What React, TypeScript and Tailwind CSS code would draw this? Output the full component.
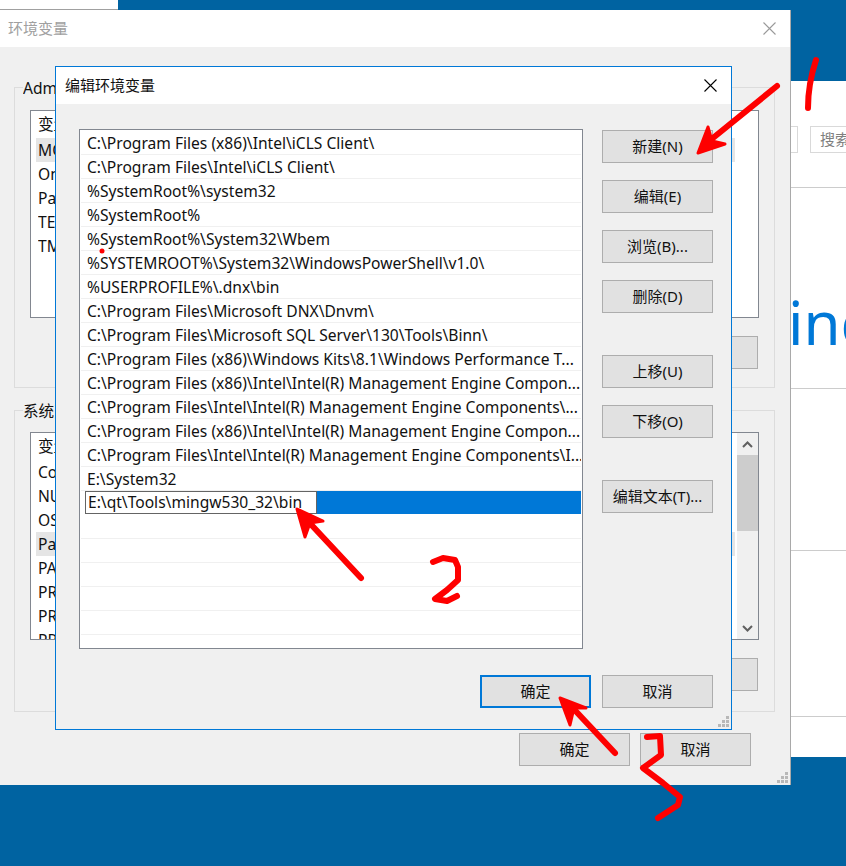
import React from "react";

const FONT = `"Noto Sans", "Noto Sans CJK SC", sans-serif`;

function Btn({ label, primary, className = "" }: { label?: string; primary?: boolean; className?: string }) {
  return (
    <div
      className={
        "w-[111px] h-[33px] flex-none flex items-center justify-center bg-[#e1e1e1] text-[15px] text-[#111] " +
        (primary ? "border-2 border-[#0078d7] " : "border border-[#adadad] ") +
        className
      }
    >
      {label}
    </div>
  );
}

function Grip() {
  return (
    <svg width="12" height="12" viewBox="0 0 12 12" className="block" fill="#b8b8b8">
      <rect x="8" y="0" width="3" height="3" />
      <rect x="4" y="4" width="3" height="3" />
      <rect x="8" y="4" width="3" height="3" />
      <rect x="0" y="8" width="3" height="3" />
      <rect x="4" y="8" width="3" height="3" />
      <rect x="8" y="8" width="3" height="3" />
    </svg>
  );
}

function Close({ color }: { color: string }) {
  return (
    <svg width="13" height="13" viewBox="0 0 13 13" className="block">
      <path d="M0.5 0.5L12.5 12.5M12.5 0.5L0.5 12.5" stroke={color} strokeWidth="1.1" fill="none" />
    </svg>
  );
}

function Clip({ text }: { text: string }) {
  return <span className="block w-[17px] overflow-hidden whitespace-nowrap">{text}</span>;
}

function VarRow({ text, selected }: { text: string; selected?: boolean }) {
  return (
    <div className={"h-6 w-[699px] ml-[5px] pl-[2px] pt-[2px] flex items-center " + (selected ? "bg-[#e5e5e5]" : "")}>
      <Clip text={text} />
    </div>
  );
}

function Group({ title, height, children }: { title: string; height: string; children: React.ReactNode }) {
  return (
    <div className={height + " w-[761px] flex-none border border-[#dcdcdc] pl-[15px] flex flex-col"}>
      <div className="-mt-[12px] -ml-[7px] h-[24px] leading-[24px] w-[33px] overflow-hidden whitespace-nowrap bg-[#f0f0f0] text-[15.6px] text-[#111]">
        {title}
      </div>
      {children}
    </div>
  );
}

const PATHS = [
  "C:\\Program Files (x86)\\Intel\\iCLS Client\\",
  "C:\\Program Files\\Intel\\iCLS Client\\",
  "%SystemRoot%\\system32",
  "%SystemRoot%",
  "%SystemRoot%\\System32\\Wbem",
  "%SYSTEMROOT%\\System32\\WindowsPowerShell\\v1.0\\",
  "%USERPROFILE%\\.dnx\\bin",
  "C:\\Program Files\\Microsoft DNX\\Dnvm\\",
  "C:\\Program Files\\Microsoft SQL Server\\130\\Tools\\Binn\\",
  "C:\\Program Files (x86)\\Windows Kits\\8.1\\Windows Performance T...",
  "C:\\Program Files (x86)\\Intel\\Intel(R) Management Engine Compon...",
  "C:\\Program Files\\Intel\\Intel(R) Management Engine Components\\...",
  "C:\\Program Files (x86)\\Intel\\Intel(R) Management Engine Compon...",
  "C:\\Program Files\\Intel\\Intel(R) Management Engine Components\\I...",
  "E:\\System32",
];

export default function App() {
  return (
    <div className="relative w-[846px] h-[866px] overflow-hidden bg-[#0063a1]" style={{ fontFamily: FONT }}>
      {/* window behind, top-left */}
      <div className="absolute left-0 top-0 w-[118px] h-[10px] bg-white border-b border-[#a0a0a0]" />

      {/* settings page behind */}
      <div className="absolute left-[118px] top-0 w-[728px] h-[757px] flex flex-col">
        <div className="h-[81px] flex-none bg-[#0063a1]" />
        <div className="h-[107px] flex-none bg-white border-b border-[#cccccc] pt-[45px] flex pl-[672px]">
          <div className="w-[8px] flex-none h-[27px] border border-l-0 border-[#d9d9d9]" />
          <div className="ml-[12px] w-[200px] flex-none h-[27px] border border-[#d9d9d9] flex items-center pl-[9px] text-[15px] text-[#808080]">
            搜索
          </div>
        </div>
        <div className="h-[201px] flex-none bg-white border-b border-[#cccccc] pl-[670px] pt-[95px] text-[60px] leading-[78px] font-normal text-[#0078d7] whitespace-nowrap overflow-hidden">
          indows
        </div>
        <div className="h-[162px] flex-none bg-white border-b border-[#cccccc]" />
        <div className="h-[166px] flex-none bg-white border-b border-[#cccccc]" />
        <div className="flex-1 bg-white" />
      </div>

      {/* outer dialog */}
      <div className="absolute left-0 top-[10px] w-[791px] h-[775px] bg-[#f0f0f0] border-r border-[#a9a9a9] flex flex-col">
        <div className="h-[37px] flex-none bg-white flex items-center justify-between pl-2 pr-[14px] text-[15px] text-[#a0a0a0]">
          <span>环境变量</span>
          <Close color="#9a9a9a" />
        </div>
        <div className="flex-1 pl-[14px] pt-[40px] flex flex-col relative">
          <Group title="Administrator 的用户变量(U)" height="h-[301px]">
            <div className="mt-[10px] w-[729px] h-[208px] flex-none bg-white border border-[#828790] text-[15.6px] text-[#111]">
              <div className="h-[27px] pl-[7px] flex items-center">
                <Clip text="变量" />
              </div>
              <VarRow text="MOZ_PLUGIN_PATH" selected />
              <VarRow text="OneDrive" />
              <VarRow text="Path" />
              <VarRow text="TEMP" />
              <VarRow text="TMP" />
            </div>
            <div className="mt-[18px] w-[728px] flex justify-end">
              <Btn />
            </div>
          </Group>
          <div className="h-[22px] flex-none" />
          <Group title="系统变量(S)" height="h-[302px]">
            <div className="mt-[9px] w-[729px] h-[208px] flex-none bg-white border border-[#828790] text-[15.6px] text-[#111] flex overflow-hidden">
              <div className="flex-1 min-w-0">
                <div className="h-[27px] pl-[7px] flex items-center">
                  <Clip text="变量" />
                </div>
                <VarRow text="ComSpec" />
                <VarRow text="NUMBER_OF_PROCESSORS" />
                <VarRow text="OS" />
                <VarRow text="Path" selected />
                <VarRow text="PATHEXT" />
                <VarRow text="PROCESSOR_ARCHITECTURE" />
                <VarRow text="PROCESSOR_IDENTIFIER" />
                <VarRow text="PROCESSOR_LEVEL" />
              </div>
              <div className="w-[21px] flex-none bg-[#f0f0f0] flex flex-col">
                <div className="h-[22px] flex items-center justify-center flex-none">
                  <svg width="11" height="7" viewBox="0 0 11 7">
                    <path d="M1 6L5.5 1.5L10 6" stroke="#606060" strokeWidth="2" fill="none" />
                  </svg>
                </div>
                <div className="h-[76px] bg-[#cdcdcd] flex-none" />
                <div className="flex-1" />
                <div className="h-[21px] flex items-center justify-center flex-none">
                  <svg width="11" height="7" viewBox="0 0 11 7">
                    <path d="M1 1L5.5 5.5L10 1" stroke="#606060" strokeWidth="2" fill="none" />
                  </svg>
                </div>
              </div>
            </div>
            <div className="mt-[18px] w-[728px] flex justify-end">
              <Btn />
            </div>
          </Group>
          <div className="mt-[21px] flex justify-end gap-[10px] w-[751px] -ml-[14px]">
            <Btn label="确定" />
            <Btn label="取消" />
          </div>
          <div className="absolute right-[1px] bottom-[1px]">
            <Grip />
          </div>
        </div>
      </div>

      {/* inner dialog */}
      <div className="absolute left-[55px] top-[66px] w-[677px] h-[664px] bg-[#f0f0f0] border border-[#0078d7] flex flex-col">
        <div className="h-[37px] flex-none bg-white flex items-center justify-between pl-[9px] pr-[14px] text-[15px] text-[#111]">
          <span>编辑环境变量</span>
          <Close color="#000000" />
        </div>
        <div className="flex-1 pl-[23px] pr-[18px] pt-[25px] relative flex flex-col">
          <div className="flex gap-[19px]">
            <div className="w-[504px] h-[520px] flex-none bg-white border border-[#828790] p-px overflow-hidden text-[15.6px] text-[#111]">
              {PATHS.map((p, i) => (
                <div key={i} className="h-6 border-b border-[#f0f0f0] pl-[6px] pt-[3px] flex items-center whitespace-nowrap overflow-hidden">
                  {p}
                </div>
              ))}
              <div className="h-6 pl-[4px] flex">
                <div className="flex-1 bg-[#0078d7] flex h-[23px]">
                  <div className="w-[232px] h-[23px] bg-white border border-[#646464] pl-[2px] flex items-center whitespace-nowrap">
                    E:\qt\Tools\mingw530_32\bin
                  </div>
                </div>
              </div>
              {[0, 1, 2, 3, 4, 5].map((i) => (
                <div key={i} className="h-6 border-b border-[#f0f0f0]" />
              ))}
            </div>
            <div className="flex flex-col pt-px">
              <Btn label="新建(N)" />
              <Btn label="编辑(E)" className="mt-[17px]" />
              <Btn label="浏览(B)..." className="mt-[17px]" />
              <Btn label="删除(D)" className="mt-[17px]" />
              <Btn label="上移(U)" className="mt-[42px]" />
              <Btn label="下移(O)" className="mt-[17px]" />
              <Btn label="编辑文本(T)..." className="mt-[42px]" />
            </div>
          </div>
          <div className="mt-[26px] flex justify-end gap-[11px]">
            <Btn label="确定" primary />
            <Btn label="取消" />
          </div>
          <div className="absolute right-[1px] bottom-[1px]">
            <Grip />
          </div>
        </div>
      </div>

      {/* red annotations */}
      <svg className="absolute inset-0 pointer-events-none" width="846" height="866" viewBox="0 0 846 866">
        <g stroke="#fe0000" strokeWidth="6" strokeLinecap="round" strokeLinejoin="round" fill="none">
          <path d="M816 60C811 75 808 92 808 108" />
          <path d="M777 86L708 142" />
          <path d="M361 578L305 518" />
          <path d="M433 562L443 558L455 560L458 567L458 580L447 590L435 599L447 601L457 596" />
          <path d="M615 753L570 705" />
          <path d="M647 737L660 736L661 755L643 768L663 783L680 797L678 805L658 818" />
        </g>
        <g fill="#fe0000" stroke="#fe0000" strokeWidth="3" strokeLinejoin="round">
          <path d="M708 127L698 153L725 144L712 141Z" />
          <path d="M297 509L305 537L310 523L323 521Z" />
          <path d="M560 698L570 725L574 708L586 708Z" />
        </g>
        <circle cx="102" cy="251" r="2.5" fill="#fe0000" />
      </svg>
    </div>
  );
}
